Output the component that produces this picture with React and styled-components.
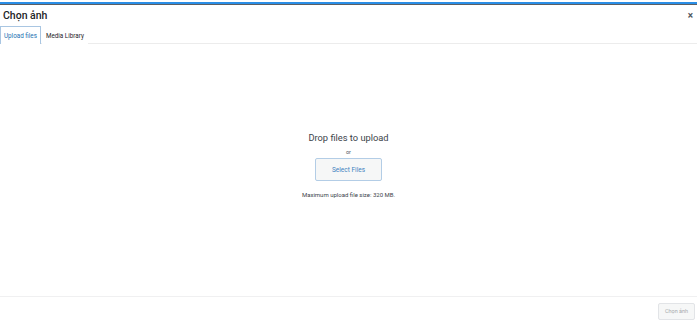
import React from "react";
import styled, { createGlobalStyle } from "styled-components";

const GlobalStyle = createGlobalStyle`
  html, body {
    margin: 0;
    padding: 0;
    background: #fff;
  }
  body {
    font-family: Roboto, "Noto Sans", "Liberation Sans", sans-serif;
    color: #1d2327;
  }
`;

const Modal = styled.div`
  width: 697px;
  height: 321px;
  display: flex;
  flex-direction: column;
  background: #fff;
  overflow: hidden;
`;

const TopEdge = styled.div`
  height: 2px;
  margin-top: 2px;
  background: #2a8ee6;
  border-bottom: 1px solid #5b5f63;
`;

const TitleBar = styled.div`
  display: flex;
  align-items: center;
  justify-content: space-between;
  height: 21px;
  padding: 0 4px 0 3px;
`;

const Title = styled.h1`
  margin: 0;
  font-size: 10.5px;
  font-weight: 500;
  color: #1d2327;
`;

const Close = styled.span`
  font-size: 10px;
  font-weight: 700;
  color: #50575e;
  line-height: 1;
`;

const Tabs = styled.div`
  display: flex;
  align-items: stretch;
  height: 17px;
  border-bottom: 1px solid #ececec;
`;

const Tab = styled.div`
  display: flex;
  align-items: center;
  padding: 0 3px;
  margin-right: 1px;
  font-size: 6.3px;
  font-weight: 400;
  color: ${(p) => (p.active ? "#2271b1" : "#1d2327")};
  border: 1px solid ${(p) => (p.active ? "#a9c6e2" : "transparent")};
  border-bottom: none;
  margin-bottom: -1px;
  background: #fff;
`;

const Body = styled.div`
  flex: 1;
  display: flex;
  flex-direction: column;
  align-items: center;
  padding-top: 88px;
`;

const DropTitle = styled.div`
  font-size: 9.3px;
  color: #3c434a;
`;

const Or = styled.div`
  margin-top: 6px;
  font-size: 5.5px;
  color: #50575e;
`;

const SelectButton = styled.button`
  margin-top: 3px;
  width: 67px;
  height: 23px;
  padding: 0;
  border: 1px solid #b3cde6;
  border-radius: 2px;
  background: #f6f7f7;
  color: #3f82c0;
  font-family: inherit;
  font-size: 6.5px;
`;

const MaxSize = styled.div`
  margin-top: 10px;
  font-size: 6px;
  color: #3c434a;
`;

const Footer = styled.div`
  height: 24px;
  border-top: 1px solid #f0f0f1;
  display: flex;
  align-items: center;
  justify-content: flex-end;
  padding: 0 2px 0 0;
`;

const Primary = styled.button`
  width: 37px;
  height: 17px;
  margin-top: 4px;
  padding: 0;
  white-space: nowrap;
  border: 1px solid #e2e4e7;
  border-radius: 2px;
  background: #f6f7f7;
  color: #a7aaad;
  font-family: inherit;
  font-size: 5.5px;
`;

export default function App() {
  return (
    <>
      <GlobalStyle />
      <Modal>
        <TopEdge />
        <TitleBar>
          <Title>Chọn ảnh</Title>
          <Close>×</Close>
        </TitleBar>
        <Tabs>
          <Tab active>Upload files</Tab>
          <Tab>Media Library</Tab>
        </Tabs>
        <Body>
          <DropTitle>Drop files to upload</DropTitle>
          <Or>or</Or>
          <SelectButton>Select Files</SelectButton>
          <MaxSize>Maximum upload file size: 320 MB.</MaxSize>
        </Body>
        <Footer>
          <Primary disabled>Chọn ảnh</Primary>
        </Footer>
      </Modal>
    </>
  );
}
